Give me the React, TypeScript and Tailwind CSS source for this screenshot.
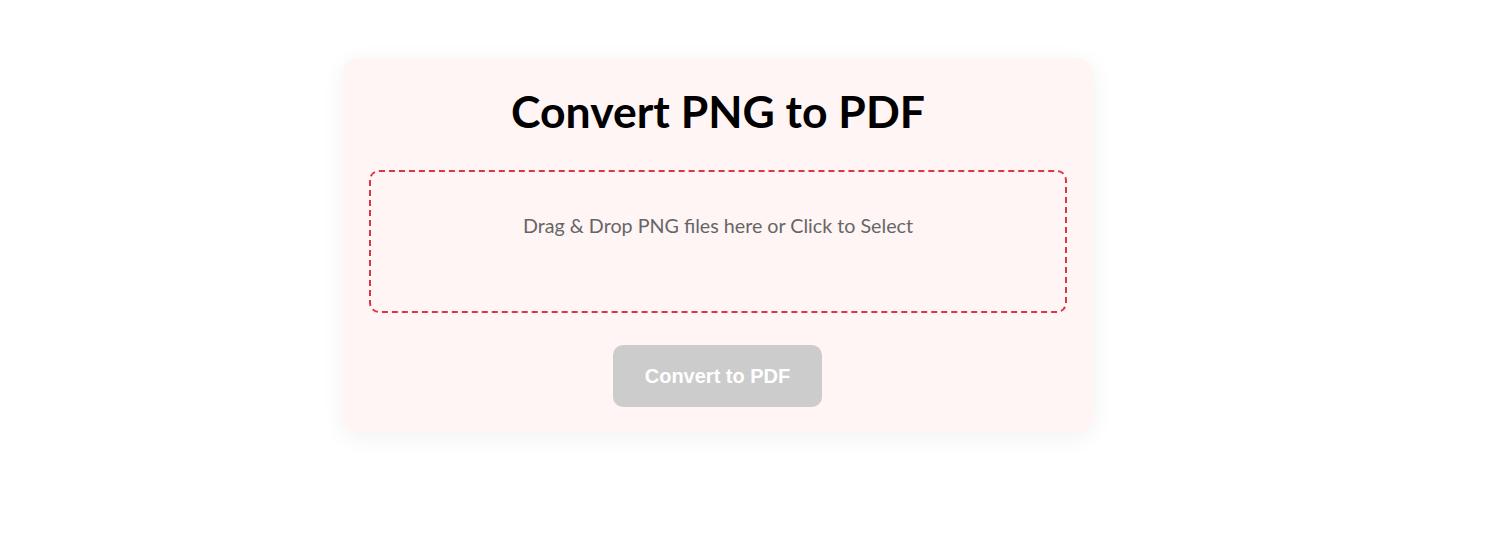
export default function App() {
  return (
    <div className="min-h-screen w-full bg-white">
      <div className="pl-[343px] pt-[58px]">
        <div className="w-[750px] h-[374px] rounded-[15px] bg-[#fff5f5] px-[26px] pt-[25px] shadow-[0_5px_24px_rgba(0,0,0,0.06)] flex flex-col items-center">
          <h1 className="font-['Lato',sans-serif] font-bold text-[44.5px] leading-[56px] text-black">
            Convert PNG to PDF
          </h1>
          <div className="mt-[31px] w-full h-[143px] rounded-[10px] border-2 border-dashed border-[#dc3545] flex justify-center pt-[40px] cursor-pointer">
            <p className="font-['Lato',sans-serif] text-[19.7px] leading-[28px] text-[#666]">
              Drag &amp; Drop PNG files here or Click to Select
            </p>
          </div>
          <button
            disabled
            className="mt-[32px] mr-[1px] w-[209px] h-[62px] rounded-[10px] bg-[#cccccc] text-white font-['Liberation_Sans',Arial,sans-serif] font-bold text-[20px]"
          >
            Convert to PDF
          </button>
        </div>
      </div>
    </div>
  );
}
